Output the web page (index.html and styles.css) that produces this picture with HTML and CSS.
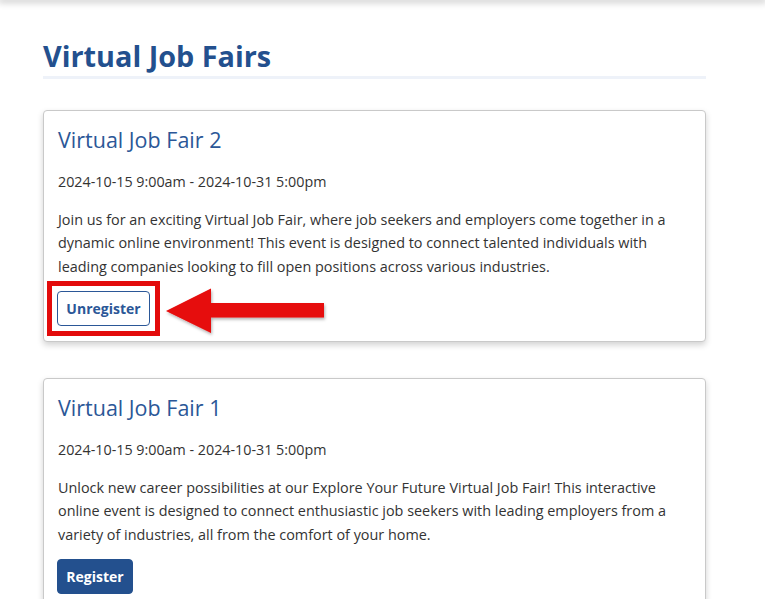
FILE: index.html
```html
<!DOCTYPE html>
<html lang="en">
<head>
<meta charset="utf-8">
<title>Virtual Job Fairs</title>
<link rel="stylesheet" href="styles.css">
</head>
<body>
<div class="topbar"></div>
<main class="page">
  <h1 class="page-title">Virtual Job Fairs</h1>
  <section class="card">
    <h2 class="card-title">Virtual Job Fair 2</h2>
    <p class="card-date">2024-10-15 9:00am - 2024-10-31 5:00pm</p>
    <p class="card-text">Join us for an exciting Virtual Job Fair, where job seekers and employers come together in a dynamic online environment! This event is designed to connect talented individuals with leading companies looking to fill open positions across various industries.</p>
    <div class="action">
      <button class="btn btn-outline">Unregister</button>
      <span class="highlight-box"></span>
      <svg class="arrow" width="170" height="56" viewBox="0 0 170 56">
        <defs>
          <filter id="sh" x="-10%" y="-20%" width="130%" height="150%">
            <feDropShadow dx="1" dy="2" stdDeviation="1.5" flood-color="#000" flood-opacity="0.3"/>
          </filter>
        </defs>
        <polygon points="5,23 50,0.5 50,15 163,15 163,29.5 50,29.5 50,45" fill="#e60909" filter="url(#sh)"/>
      </svg>
    </div>
  </section>
  <section class="card">
    <h2 class="card-title">Virtual Job Fair 1</h2>
    <p class="card-date">2024-10-15 9:00am - 2024-10-31 5:00pm</p>
    <p class="card-text">Unlock new career possibilities at our Explore Your Future Virtual Job Fair! This interactive online event is designed to connect enthusiastic job seekers with leading employers from a variety of industries, all from the comfort of your home.</p>
    <div class="action">
      <button class="btn btn-solid">Register</button>
    </div>
  </section>
</main>
</body>
</html>
```

FILE: styles.css
```css
html, body {
  margin: 0;
  padding: 0;
  background: #ffffff;
}
body {
  font-family: "Open Sans", "Noto Sans", "Liberation Sans", sans-serif;
  color: #333333;
  overflow: hidden;
}
.topbar {
  height: 0;
  box-shadow: 0 0 7px 2px rgba(0, 0, 0, 0.28);
}
.page {
  width: 663px;
  margin: 0 0 0 43px;
  padding-top: 36px;
}
.page-title {
  margin: 0 0 31px;
  font-size: 28.8px;
  line-height: 40px;
  font-weight: 700;
  color: #23508e;
  border-bottom: 3px solid #eef2f9;
  padding-bottom: 0;
}
.card {
  border: 1px solid #c9c9c9;
  border-radius: 4px;
  box-shadow: 0 3px 6px rgba(0, 0, 0, 0.18);
  padding: 14px 15px 15px 14px;
  margin-bottom: 36px;
  background: #fff;
}
.card-title {
  margin: 0 0 15px;
  font-size: 21.5px;
  font-weight: 400;
  line-height: 30px;
  color: #2b5797;
}
.card-date {
  margin: 0 0 14px;
  font-size: 14.3px;
  line-height: 23.5px;
}
.card-text {
  margin: 0 0 13px;
  font-size: 14.4px;
  line-height: 23.5px;
}
.action {
  position: relative;
  display: flex;
  height: 35px;
}
.btn {
  font-family: "Open Sans", "Noto Sans", "Liberation Sans", sans-serif;
  font-size: 14px;
  font-weight: 700;
  border-radius: 4px;
  height: 35px;
  padding: 0 8px;
  margin-left: -1px;
  cursor: pointer;
}
.btn-outline {
  width: 93px;
  background: #fff;
  color: #2b5797;
  border: 1px solid #2b5797;
}
.btn-solid {
  width: 76px;
  background: #23508e;
  color: #fff;
  border: 1px solid #23508e;
}
.highlight-box {
  position: absolute;
  left: -11px;
  top: -10px;
  width: 103px;
  height: 45px;
  border: 5px solid #e30b0b;
}
.arrow {
  position: absolute;
  left: 103px;
  top: -3px;
}
```
